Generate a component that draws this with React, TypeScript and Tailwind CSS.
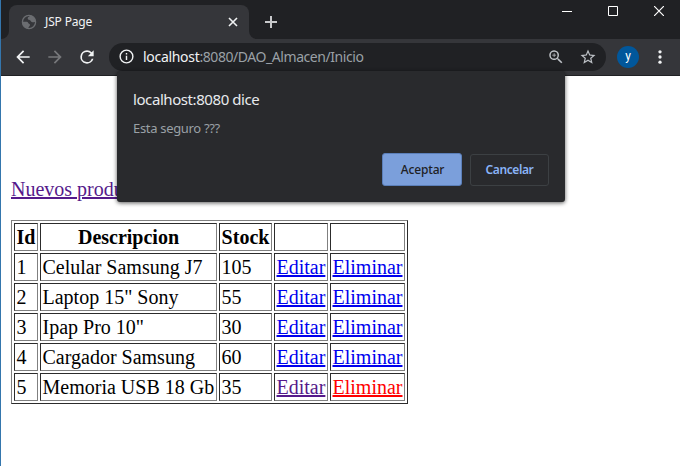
import type { ReactNode } from 'react';

const products = [
  { id: 1, name: 'Celular Samsung J7', stock: 105 },
  { id: 2, name: 'Laptop 15" Sony', stock: 55 },
  { id: 3, name: 'Ipap Pro 10"', stock: 30 },
  { id: 4, name: 'Cargador Samsung', stock: 60 },
  { id: 5, name: 'Memoria USB 18 Gb', stock: 35 },
];

const cellBase =
  'h-7 border border-t-[#2c2c2c] border-l-[#2c2c2c] border-r-[#808080] border-b-[#808080] py-0 leading-[24px] whitespace-nowrap align-middle';
const head = `${cellBase} px-px`;
const cell = `${cellBase} pl-[1.5px] pr-0`;

function Icon({ children, className = '', size = 20 }: { children: ReactNode; className?: string; size?: number }) {
  return (
    <svg viewBox="0 0 24 24" width={size} height={size} fill="currentColor" className={`shrink-0 ${className}`}>
      {children}
    </svg>
  );
}

function TabStrip() {
  return (
    <div className="flex h-[39px] items-end bg-[#202124]">
      <div className="h-2 w-2 bg-[#35363a]">
        <div className="h-2 w-2 rounded-br-lg bg-[#202124]" />
      </div>
      <div className="flex h-[34px] w-[240px] items-center rounded-t-lg bg-[#35363a] pl-[12px] pr-[8px]">
        <svg viewBox="0 0 16 16" width="16" height="16" className="shrink-0">
          <circle cx="8" cy="8" r="6.600" fill="none" stroke="#6b6d71" strokeWidth="1.300" />
          <path d="M1.500 7.700h4.200c1.600 0 1.500 2.300 3.200 2.500v1.200c-.1.900-1.400.8-1.600 2.900C3.500 13.900 1.300 11 1.500 7.700zM9 1.600c-.1 1-2.300 1.300-2.300 2.800 0 1.800 2.500.9 3 2.500.3 1.200 2.200 1.400 4.600 1.200C14.500 4.600 12 1.800 9 1.600z" fill="#6b6d71" />
        </svg>
        <span className="ml-[8px] flex-1 text-[12px] leading-4 tracking-[-0.15px] text-[#f1f3f4]">JSP Page</span>
        <svg width="16" height="16" viewBox="0 0 16 16" className="text-[#f1f3f4]">
          <path d="M4 4l8 8M12 4l-8 8" stroke="currentColor" strokeWidth="1.6" />
        </svg>
      </div>
      <div className="h-2 w-2 bg-[#35363a]">
        <div className="h-2 w-2 rounded-bl-lg bg-[#202124]" />
      </div>
      <svg width="14" height="14" viewBox="0 0 14 14" className="mb-[10px] ml-[7px] text-[#c8c9cb]">
        <path d="M7 1v12M1 7h12" stroke="currentColor" strokeWidth="2" />
      </svg>
      <div className="ml-auto flex gap-[36px] self-start pr-4 pt-[6px] text-white">
        <svg width="10" height="10" viewBox="0 0 10 10"><path d="M0 5.500h10" stroke="currentColor" /></svg>
        <svg width="10" height="10" viewBox="0 0 10 10"><path d="M.5.5h9v9h-9z" fill="none" stroke="currentColor" /></svg>
        <svg width="10" height="10" viewBox="0 0 10 10"><path d="M0 0l10 10M10 0L0 10" stroke="currentColor" strokeWidth="1.2" /></svg>
      </div>
    </div>
  );
}

function Toolbar() {
  return (
    <div className="flex h-[37px] items-center border-b border-[#202124] bg-[#35363a] pb-px pl-[12px]">
      <Icon className="text-[#f1f3f4]"><path d="M20 11H7.830l5.590-5.590L12 4l-8 8 8 8 1.410-1.410L7.830 13H20v-2z" /></Icon>
      <Icon className="ml-3 text-[#77787b]"><path d="M12 4l-1.410 1.410L16.170 11H4v2h12.170l-5.580 5.590L12 20l8-8z" /></Icon>
      <Icon className="ml-3 text-[#f1f3f4]"><path d="M17.650 6.350A7.960 7.960 0 0 0 12 4a8 8 0 1 0 7.730 10h-2.080A6 6 0 1 1 12 6c1.660 0 3.140.69 4.220 1.780L13 11h7V4l-2.350 2.350z" /></Icon>
      <div className="ml-3 flex h-7 w-[497px] items-center rounded-full bg-[#202124] pl-[9px] pr-[9px]">
        <Icon size={17} className="text-[#f1f3f4]"><path d="M11 7h2v2h-2zm0 4h2v6h-2zm1-9a10 10 0 1 0 0 20 10 10 0 0 0 0-20zm0 18a8 8 0 1 1 0-16 8 8 0 0 1 0 16z" /></Icon>
        <span className="ml-2 flex-1 whitespace-nowrap text-[14px] leading-5 tracking-[-0.44px] text-[#9aa0a6]">
          <span className="tracking-[-0.3px] text-[#f1f3f4]">localhost</span>:8080/DAO_Almacen/Inicio
        </span>
        <Icon size={18} className="text-[#bdc1c6]"><path d="M15.500 14h-.79l-.28-.27A6.500 6.500 0 1 0 13.730 14.430l.27.28v.79l5 4.990L20.490 19l-4.990-5zm-6 0a4.500 4.500 0 1 1 0-9 4.500 4.500 0 0 1 0 9zM9 7h1v2h2v1h-2v2H9v-2H7V9h2z" /></Icon>
        <Icon size={18} className="ml-[14px] text-[#bdc1c6]"><path d="M22 9.240l-7.190-.62L12 2 9.190 8.630 2 9.240l5.460 4.730L5.820 21 12 17.270 18.180 21l-1.630-7.030L22 9.240zM12 15.400l-3.760 2.270 1-4.280-3.320-2.880 4.380-.38L12 6.100l1.710 4.040 4.380.38-3.320 2.880 1 4.280L12 15.400z" /></Icon>
      </div>
      <div className="ml-[11px] flex size-[22px] items-center justify-center rounded-full bg-[#01579b] pb-[2px] font-[Roboto,sans-serif] text-[12px] leading-none text-white">y</div>
      <Icon className="ml-[11px] text-[#f1f3f4]"><circle cx="12" cy="5.800" r="2" /><circle cx="12" cy="12" r="2" /><circle cx="12" cy="18.200" r="2" /></Icon>
    </div>
  );
}

function Dialog() {
  return (
    <div className="absolute left-[116px] top-[71px] flex h-[131px] w-[448px] flex-col rounded-[3px] bg-[#292a2d] px-4 pb-4 pt-[18px] shadow-[0_1px_4px_rgba(0,0,0,0.65)]">
      <h1 className="text-[15px] leading-5 tracking-[-0.42px] text-[#e8eaed]">localhost:8080 dice</h1>
      <p className="mt-[10px] text-[13px] leading-[18px] tracking-[-0.32px] text-[#9aa0a6]">Esta seguro ???</p>
      <div className="mt-auto flex items-center justify-end gap-2 text-[12px] font-semibold">
        <button className="h-[33px] w-[80px] rounded-[3px] border border-[#5b7fb9] bg-[#7b9fdb] pl-px pt-px tracking-[-0.15px] text-[#202124]"><span className="font-medium">Aceptar</span></button>
        <button className="h-8 w-[79px] rounded-[3px] border border-[#3c4043] pt-px tracking-[-0.4px] text-[#8ab4f8]">Cancelar</button>
      </div>
    </div>
  );
}

export default function App() {
  return (
    <div className="relative h-[466px] w-[680px] overflow-hidden border-l border-[#3476ad] bg-white font-['Noto_Sans','Open_Sans',sans-serif]">
      <TabStrip />
      <Toolbar />
      <main className="pl-[10px] pt-[102px] font-['Liberation_Serif',serif] text-[20px] leading-[23px] text-black">
        <a className="text-[#551a8b] underline decoration-2">Nuevos productos</a>
        <table className="mt-[19px] w-[397px] table-fixed border-separate border-spacing-[2px] border border-t-[#808080] border-l-[#808080] border-r-[#2c2c2c] border-b-[#2c2c2c]">
          <colgroup>
            <col className="w-[24px]" />
            <col className="w-[177px]" />
            <col className="w-[53px]" />
            <col className="w-[54px]" />
            <col className="w-[75px]" />
          </colgroup>
          <thead>
            <tr>
              <th className={head}>Id</th>
              <th className={head}>Descripcion</th>
              <th className={head}>Stock</th>
              <th className={head} />
              <th className={head} />
            </tr>
          </thead>
          <tbody>
            {products.map((p) => (
              <tr key={p.id}>
                <td className={cell}>{p.id}</td>
                <td className={cell}>{p.name}</td>
                <td className={cell}>{p.stock}</td>
                <td className={cell}><a className={`underline decoration-2 ${p.id === 5 ? 'text-[#551a8b]' : 'text-[#0000ee]'}`}>Editar</a></td>
                <td className={cell}><a className={`underline decoration-2 ${p.id === 5 ? 'text-[#ff0000]' : 'text-[#0000ee]'}`}>Eliminar</a></td>
              </tr>
            ))}
          </tbody>
        </table>
      </main>
      <Dialog />
    </div>
  );
}
